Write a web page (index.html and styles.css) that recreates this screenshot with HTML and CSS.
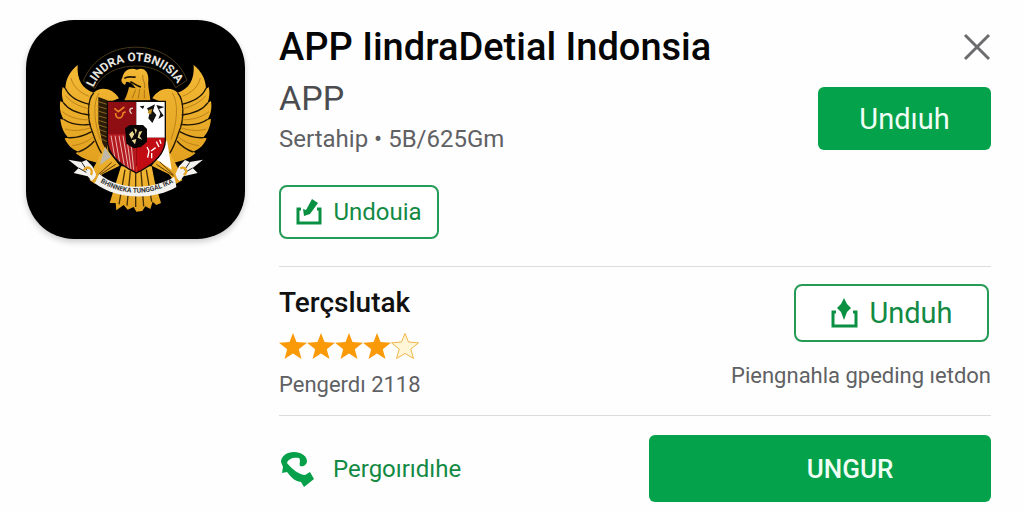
FILE: index.html
```html
<!DOCTYPE html>
<html lang="id">
<head>
  <meta charset="UTF-8" />
  <meta name="viewport" content="width=device-width, initial-scale=1.0"/>
  <title>APP IindraDetial Indonsia</title>
  <link rel="stylesheet" href="styles.css">
</head>
<body>

  <main class="app-page">
    <!-- APP ICON -->
    <div class="app-icon">
      <svg viewBox="33 31 657 657" role="img" aria-label="Garuda">
        <defs>
          <linearGradient id="gold" x1="0" y1="0" x2="0" y2="1">
            <stop offset="0" stop-color="#f3b935"/>
            <stop offset="1" stop-color="#e2a11f"/>
          </linearGradient>
          <clipPath id="shieldClip">
            <path d="M277 275H451V390C451 440 405 470 364 490C323 470 277 440 277 390Z"/>
          </clipPath>
          <path id="arcText" d="M235 234C279 128 441 128 494 234"/>
          <path id="ribbonText" d="M256 518Q362 580 472 520"/>
          <g id="wing">
            <path fill="url(#gold)" d="M188 166C185 210 202 238 236 249C256 230 292 234 312 266L278 280V396C284 430 276 452 262 464C234 456 204 450 182 430L191 426C170 420 156 404 149 386L160 384C144 368 138 348 136 328L147 330C135 312 133 292 136 274L146 280C140 262 139 246 143 232L151 238C152 206 166 184 188 166Z"/>
            <g fill="none" stroke="#211604" stroke-width="4">
              <path d="M151 236C162 262 188 276 224 284"/>
              <path d="M145 279C160 300 188 312 224 316"/>
              <path d="M146 329C166 344 194 348 226 344"/>
              <path d="M158 384C182 386 208 378 230 366"/>
              <path d="M190 427C210 420 226 408 238 394"/>
              <path d="M236 250C216 270 216 330 232 366C240 390 248 414 262 434"/>
            </g>
            <g fill="none" stroke="#a66d10" stroke-width="2">
              <path d="M168 205C174 232 196 250 222 260"/>
              <path d="M152 258C170 280 194 290 222 298"/>
              <path d="M142 306C164 324 196 332 224 330"/>
              <path d="M150 358C176 366 204 362 228 354"/>
              <path d="M172 408C200 404 222 394 236 380"/>
              <path d="M252 250C232 280 238 340 256 390"/>
            </g>
          </g>
          <g id="ribbonEnd">
            <path fill="#f4f2ee" d="M160 450L200 457L214 451L232 470L246 500L230 514L218 500L176 490L191 475Z"/>
            <path fill="none" stroke="#222" stroke-width="3" d="M200 458L216 482M191 475L214 488"/>
          </g>
        </defs>

        <path class="arc-line" d="M205 214C258 78 468 80 516 212"/>
        <path class="arc-line" d="M205 214L240 236C280 146 444 148 482 234L516 212"/>
        <text class="arc-label"><textPath href="#arcText">LINDRA OTBNIISIA</textPath></text>

        <use href="#wing"/>
        <use href="#wing" transform="matrix(-1 0 0 1 724 0)"/>
        <path fill="#2a1c06" d="M250 262L277 272V428L262 400L250 340Z"/>
        <path fill="none" stroke="#8a6420" stroke-width="3" d="M250 276L276 284M248 290L276 298M248 304L276 312M248 318L276 326M250 332L276 340M252 346L276 354M254 360L276 368M256 374L276 382M260 388L276 396"/>

        <!-- tail -->
        <path fill="url(#gold)" d="M318 470H410L420 520L438 580L424 586L413 576L406 598L391 590L382 604L364 606L356 592L338 600L326 586L304 602L302 580L284 580Z"/>
        <path fill="none" stroke="#4a3007" stroke-width="4" d="M330 480L312 584M346 484L336 588M362 488V592M378 484L386 590M394 480L410 576"/>

        <!-- legs -->
        <path fill="url(#gold)" d="M270 412L314 468L262 494L240 522L224 512L228 488Z"/>
        <path fill="#bdb8a8" d="M270 412L288 442L254 466Z"/>
        <path fill="url(#gold)" d="M454 412L410 468L462 494L484 522L502 512L496 488Z"/>
        <path fill="#fff" d="M456 392L470 480L418 446Z"/>
        <path fill="none" stroke="#5d3d0a" stroke-width="3" d="M290 458L236 508M302 464L248 500M434 456L488 508M424 464L478 500"/>

        <use href="#ribbonEnd"/>
        <use href="#ribbonEnd" transform="matrix(-1 0 0 1 724 0)"/>
        <path fill="#f4f2ee" d="M252 492C312 542 412 544 480 500L484 532C420 570 310 574 238 520Z"/>
        <path fill="none" stroke="#e5a624" stroke-width="7" d="M206 482C218 466 236 476 228 496M238 516L248 494M496 476C512 468 520 486 506 496M486 516L478 494"/>
        <text class="ribbon-label"><textPath href="#ribbonText">BHINNEKA TUNGGAL IKA</textPath></text>

        <!-- head -->
        <path fill="url(#gold)" d="M322 204C326 182 346 172 366 180C386 170 402 186 400 212C398 232 404 248 406 272H328C336 256 340 242 342 232L362 236C352 220 346 218 334 216L330 226C320 220 316 212 322 204Z"/>
        <path fill="none" stroke="#181004" stroke-width="5" d="M328 206C340 198 352 204 362 202M346 216C356 220 366 230 378 232"/>
        <path fill="none" stroke="#8b5b0c" stroke-width="2" d="M384 196C380 212 394 220 388 236M362 240L352 266M374 238L370 266M388 240V266"/>

        <!-- shield -->
        <g clip-path="url(#shieldClip)">
          <path fill="#8e0e13" d="M277 275H364V380H277Z"/>
          <path fill="#fff" d="M364 275H451V384H364Z"/>
          <path fill="#b51a20" d="M277 374H364V490H277Z"/>
          <path fill="#c20c14" d="M364 384H451V490H364Z"/>
          <path fill="none" stroke="#e8b6b0" stroke-width="3" d="M288 378L300 446M300 378L314 458M312 378L328 468M324 378L340 476M336 390L348 478M348 400L356 480"/>
          <path fill="none" stroke="#e88125" stroke-width="5" d="M298 296L310 306L328 292M302 310C300 330 324 330 324 310L332 306"/>
          <path fill="none" stroke="#e9d4cc" stroke-width="4" d="M354 296C342 294 342 306 350 312"/>
          <path fill="#111" d="M374 290L388 288L384 298ZM396 296L420 284L414 304L424 316L412 340L400 326L404 310ZM424 286L448 292L432 298L446 318L430 328L436 312Z"/>
          <path fill="#c49325" d="M402 300L412 298L408 314L398 310Z"/>
          <path fill="none" stroke="#fff" stroke-width="4" d="M396 412L402 424L398 444M408 424L422 414M410 430V446M424 396L432 412M434 390L438 402"/>
        </g>
        <path fill="none" stroke="#100b08" stroke-width="4" d="M277 275H451V390C451 440 405 470 364 490C323 470 277 440 277 390Z"/>
        <path fill="#080606" d="M330 356L344 346H384L396 358V396L378 412L356 416L334 402Z"/>
        <path fill="#e9d890" d="M342 374L352 364L358 374L350 388ZM358 356L366 360L362 374ZM372 366L382 364L374 380L382 390L368 384ZM350 392L364 388L360 404Z"/>
      </svg>
    </div>

    <div class="app-info">
      <!-- HEADER -->
      <header class="title-bar">
        <h1>APP IindraDetial Indonsia</h1>
        <button class="close-btn" aria-label="Tutup">
          <svg width="28" height="28" viewBox="0 0 28 28"><path d="M2 2L26 26M26 2L2 26"/></svg>
        </button>
      </header>

      <section class="summary">
        <div>
          <p class="category">APP</p>
          <p class="meta">Sertahip • 5B/625Gm</p>
        </div>
        <button class="btn btn-small">Undıuh</button>
      </section>

      <button class="btn-outline">
        <svg width="26" height="28" viewBox="0 0 26 28">
          <path class="tray" d="M5 11H2V25H24V11H21"/>
          <path class="fill" d="M16 1L22 5L14 16L8 18L7 11L10 12Z"/>
        </svg>
        Undouia
      </button>

      <!-- RATING -->
      <section class="rating">
        <div>
          <h2>Terçslutak</h2>
          <div class="stars" role="img" aria-label="4 dari 5">
            <svg viewBox="0 0 28 28"><path d="M14 1L17.500 10L28 10.800L19.800 17.200L22.500 27L14 21.500L5.500 27L8.200 17.200L0 10.800L10.500 10Z"/></svg>
            <svg viewBox="0 0 28 28"><path d="M14 1L17.500 10L28 10.800L19.800 17.200L22.500 27L14 21.500L5.500 27L8.200 17.200L0 10.800L10.500 10Z"/></svg>
            <svg viewBox="0 0 28 28"><path d="M14 1L17.500 10L28 10.800L19.800 17.200L22.500 27L14 21.500L5.500 27L8.200 17.200L0 10.800L10.500 10Z"/></svg>
            <svg viewBox="0 0 28 28"><path d="M14 1L17.500 10L28 10.800L19.800 17.200L22.500 27L14 21.500L5.500 27L8.200 17.200L0 10.800L10.500 10Z"/></svg>
            <svg class="empty" viewBox="0 0 28 28"><path d="M14 1.500L17.500 10L27.500 10.800L19.800 17.200L22.500 26.500L14 21.500L5.500 26.500L8.200 17.200L0.500 10.800L10.500 10Z"/></svg>
          </div>
          <p class="note">Pengerdı 2118</p>
        </div>
        <div class="rating-side">
          <button class="btn-outline btn-wide">
            <svg width="28" height="32" viewBox="0 0 28 32">
              <path class="tray" d="M6 15H3V29H26V15H23"/>
              <path class="fill" d="M14 1L17 7L21 11L17 15L14 23L11 15L7 11L11 7Z"/>
            </svg>
            Unduh
          </button>
          <p class="note">Piengnahla gpeding ıetdon</p>
        </div>
      </section>

      <!-- FOOTER -->
      <footer class="actions">
        <a class="call-link" href="#">
          <svg width="36" height="36" viewBox="0 0 36 36">
            <path d="M21 15C24 16 28 14 28 10C28 5 22 1 15 1C8 1 2 5 2 11L4 16L3 22L8 21C12 26 15 30 22 31L25 36L35 28L31 21L26 24C20 24 12 17 8 12C9 8 14 6 20 7C22 9 20 12 21 15Z"/>
          </svg>
          Pergoırıdıhe
        </a>
        <button class="btn btn-big">UNGUR</button>
      </footer>
    </div>
  </main>

</body>
</html>
```
FILE: styles.css
```css
* {
  margin: 0; padding: 0;
  box-sizing: border-box;
  font-family: Roboto, 'Liberation Sans', sans-serif;
}

body {
  background: #fefefe;
  color: #5f6164;
}

.app-page {
  display: flex;
  align-items: flex-start;
  gap: 34px;
  padding: 20px 33px 10px 26px;
}

.app-icon {
  flex: none;
  width: 219px;
  height: 219px;
  border-radius: 48px;
  background: #000;
  box-shadow: 0 3px 6px rgba(0, 0, 0, 0.2);
}

.app-icon svg {
  display: block;
  width: 100%;
}

.arc-line {
  fill: none;
  stroke: #6b5424;
  stroke-width: 2;
}

.arc-label {
  font-size: 36px;
  font-weight: 700;
  fill: #e8e6e0;
}

.ribbon-label {
  font-size: 20px;
  font-weight: 700;
  fill: #333;
}

.app-info {
  flex: 1;
}

.title-bar {
  display: flex;
  justify-content: space-between;
  align-items: center;
  height: 54px;
}

h1 {
  font-size: 38px;
  font-weight: 500;
  color: #050505;
}

.close-btn {
  width: 28px;
  height: 28px;
  border: none;
  background: transparent;
  cursor: pointer;
}

.close-btn path {
  stroke: #6c6c6f;
  stroke-width: 3;
}

.summary {
  display: flex;
  justify-content: space-between;
  align-items: flex-start;
  padding-top: 4px;
}

.summary .btn {
  margin-top: 9px;
}

.category {
  font-size: 34px;
  line-height: 40px;
  color: #4b4c50;
}

.meta {
  font-size: 24px;
  line-height: 42px;
}

.btn {
  border: none;
  border-radius: 6px;
  background: #04a24a;
  color: #f0fff5;
  cursor: pointer;
}

.btn-small {
  width: 173px;
  height: 63px;
  font-size: 29px;
}

.btn-outline {
  display: flex;
  align-items: center;
  justify-content: center;
  gap: 11px;
  width: 160px;
  height: 54px;
  margin-top: 25px;
  border: 2px solid #269b57;
  border-radius: 8px;
  background: #fff;
  color: #128a43;
  font-size: 24px;
  cursor: pointer;
}

.tray {
  fill: none;
  stroke: #0a9043;
  stroke-width: 3;
}

.fill {
  fill: #0a9043;
}

.rating {
  display: flex;
  justify-content: space-between;
  height: 150px;
  margin-top: 27px;
  padding-top: 17px;
  border-top: 1px solid #dcdcde;
  border-bottom: 1px solid #dcdcde;
}

h2 {
  font-size: 28px;
  line-height: 38px;
  font-weight: 500;
  color: #111;
}

.stars {
  display: flex;
  height: 28px;
  margin: 10px 0;
}

.stars svg {
  width: 28px;
  height: 28px;
  fill: #fb9a08;
}

.stars .empty {
  fill: #fff6d8;
  stroke: #eeb54a;
}

.note {
  font-size: 22px;
  line-height: 30px;
}

.rating-side {
  display: flex;
  flex-direction: column;
  align-items: flex-end;
  gap: 19px;
}

.btn-wide {
  width: 195px;
  height: 58px;
  margin: 0 2px 0 0;
  font-size: 29px;
}

.actions {
  display: flex;
  justify-content: space-between;
  align-items: center;
  padding-top: 19px;
}

.call-link {
  display: flex;
  align-items: center;
  gap: 18px;
  color: #128a43;
  font-size: 24px;
  text-decoration: none;
}

.call-link path {
  fill: #06a04a;
}

.btn-big {
  width: 48%;
  height: 67px;
  padding-left: 60px;
  font-size: 26px;
  font-weight: 500;
}
```
